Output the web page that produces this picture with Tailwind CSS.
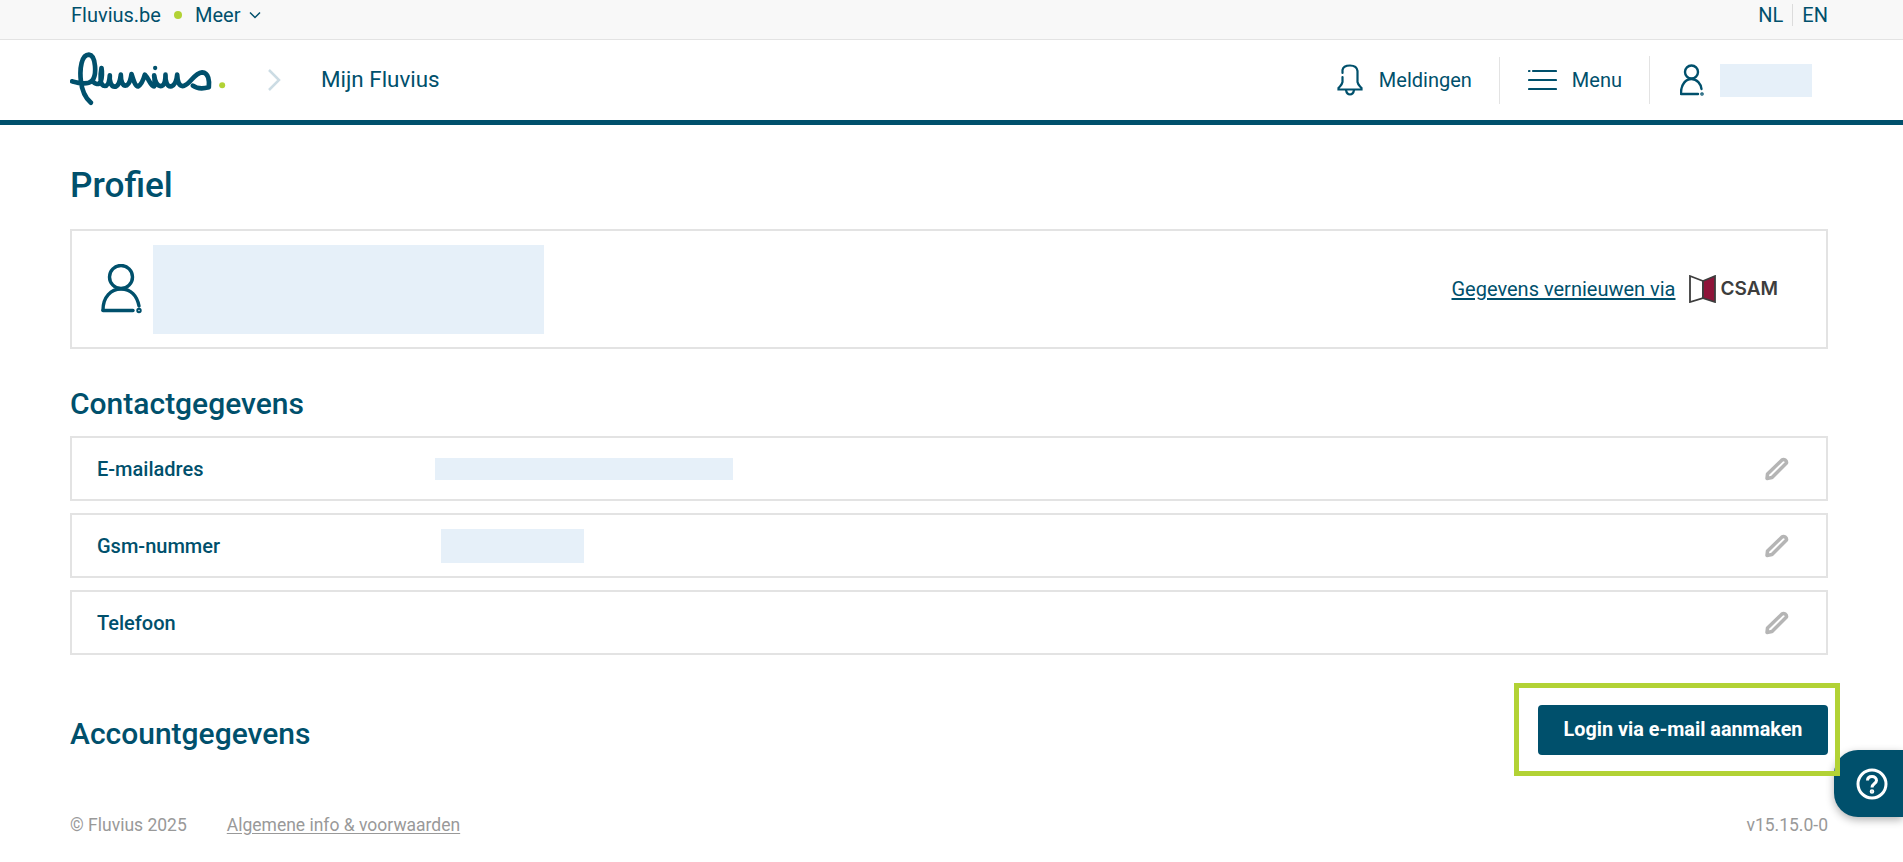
<!DOCTYPE html>
<html lang="nl">
<head>
<meta charset="UTF-8">
<title>Profiel - Mijn Fluvius</title>
<script src="https://cdn.jsdelivr.net/npm/@tailwindcss/browser@4"></script>
</head>
<body class="relative h-[862px] overflow-hidden bg-white font-['Roboto',sans-serif] text-[#00506c]">

<!-- Topbar -->
<div class="flex h-10 items-center justify-between border-b border-[#e3e3e3] bg-[#f8f8f8] pl-[70px] pr-[75px] pb-[9px] text-[20px]">
  <div class="flex items-center">
    <a class="ml-[1px]">Fluvius.be</a>
    <span class="mx-[13px] h-2 w-2 rounded-full bg-[#b2d235]"></span>
    <a>Meer</a>
    <svg class="ml-2" width="14" height="8" viewBox="0 0 14 8" fill="none" stroke="#00506c" stroke-width="1.5"><path d="M2 1.500 7 6.500 12 1.500"/></svg>
  </div>
  <div class="flex items-center">
    <a>NL</a>
    <span class="mx-[9px] h-[22px] w-[1px] bg-[#dcdcdc]"></span>
    <a>EN</a>
  </div>
</div>

<!-- Header -->
<header class="flex h-[85px] items-center justify-between border-b-[5px] border-[#00506c] pl-[70px] pr-[91px]">
  <div class="flex items-center">
    <svg width="157" height="56" viewBox="30 40 470 168" fill="none" stroke="#00506c" stroke-width="14" stroke-linecap="round" stroke-linejoin="round">
      <path d="M36 128C55 133 80 140 96 126C110 110 108 50 86 48C64 48 58 90 62 125C65 155 75 178 92 192"/>
      <path d="M96 126C105 138 116 140 122 128C126 115 126 100 124 88C120 110 118 142 134 142C146 142 148 122 149 110C147 126 152 146 166 144C178 140 180 122 182 108C182 126 186 144 200 140C210 134 212 120 214 106C220 125 226 144 234 143C244 138 250 122 254 108C268 122 270 142 282 143C286 130 282 118 282 110C284 126 290 144 304 142C316 138 316 120 316 108C315 126 320 146 334 143C346 138 350 120 351 108C352 128 356 144 370 142C392 136 400 104 426 101C446 102 448 128 446 146C430 150 410 150 398 141"/>
      <circle cx="285" cy="88" r="3" fill="#00506c" stroke-width="7"/>
      <circle cx="486" cy="140" r="9" fill="#b2d235" stroke="none"/>
    </svg>
    <svg class="ml-[40px]" width="14" height="24" viewBox="0 0 14 24" fill="none" stroke="#ccdce4" stroke-width="2.500"><path d="M2 2 12 12 2 22"/></svg>
    <span class="ml-[40px] text-[22.4px]">Mijn Fluvius</span>
  </div>
  <div class="flex h-full items-center text-[20px]">
    <div class="flex items-center gap-[16px] pr-[27px]">
      <svg width="26" height="32" viewBox="0 0 26 32" fill="none" stroke="#00506c" stroke-width="2.200" stroke-linecap="round"><path d="M5.500 9V6C6 3 9 1.500 13 1.500S20 3 20.500 7V18C21 21 23 22 24.500 24V25.500H1.500V24C3 22 5 21 5.500 18V13"/><path d="M9 26C9.500 29 11 30.500 13 30.500S16.500 29 17 26"/></svg>
      <span>Meldingen</span>
    </div>
    <div class="flex h-[47px] items-center gap-[15px] border-l border-[#e3e3e3] pl-[28px] pr-[27px]">
      <svg width="29" height="22" viewBox="0 0 29 22" fill="none" stroke="#00506c" stroke-width="2.200" stroke-linecap="round"><path d="M1 2H1.500M5 2H28M1 11H28M1 20H28"/></svg>
      <span>Menu</span>
    </div>
    <div class="flex h-[48px] items-center border-l border-[#e3e3e3] pl-[30px]">
      <svg width="24" height="32" viewBox="0 0 24 32" fill="none" stroke="#00506c" stroke-width="2.400" stroke-linecap="round"><circle cx="11.500" cy="8" r="6.500"/><path d="M1 29C1 20 6 15 11.500 15S21 20 21.500 25"/><path d="M1 30H18"/><circle cx="22" cy="30" r=".6"/></svg>
      <div class="ml-[16px] h-[33px] w-[92px] bg-[#e6f0f9]"></div>
    </div>
  </div>
</header>

<main class="pl-[70px] pr-[75px]">
  <h1 class="mt-[34px] text-[35.2px]/[52px] font-medium">Profiel</h1>

  <section class="mt-[18px] flex h-[120px] items-center justify-between border-2 border-[#e3e3e3] pl-[29px] pr-[48px]">
    <div class="flex items-center">
      <svg width="41" height="50" viewBox="0 0 41 50" fill="none" stroke="#00506c" stroke-width="3.400" stroke-linecap="round"><circle cx="20" cy="13" r="11.500"/><path d="M2 46C2 33 10 25 20 25S36 32 38 42"/><path d="M2 46.500H32"/><circle cx="38" cy="46.500" r="1"/></svg>
      <div class="ml-[11px] h-[89px] w-[391px] bg-[#e6f0f9]"></div>
    </div>
    <div class="flex items-center">
      <a class="text-[20px] underline underline-offset-2">Gegevens vernieuwen via</a>
      <svg class="ml-[14px]" width="27" height="28" viewBox="0 0 27 28"><path d="M1 1 14 6V23L1 27Z" fill="#fff" stroke="#3d3d3d" stroke-width="1.800"/><path d="M26 1 14 6V23L26 27Z" fill="#8e1439" stroke="#3d3d3d" stroke-width="1.800"/></svg>
      <span class="ml-[4px] font-['Inter',sans-serif] text-[19px] font-semibold text-[#3d3d3d]">CSAM</span>
    </div>
  </section>

  <h2 class="mt-[33px] text-[30px]/[44px] font-medium">Contactgegevens</h2>

  <div class="mt-[10px] flex flex-col gap-[12px]">
    <div class="flex h-[65px] items-center border-2 border-[#e3e3e3] pl-[25px] pr-[36px]">
      <span class="w-[332px] text-[20px] font-medium">E-mailadres</span>
      <div class="ml-[6px] h-[22px] w-[298px] bg-[#e6f0f9]"></div>
      <svg class="ml-auto" width="26" height="24" viewBox="0 0 26 24" fill="none" stroke="#b5b5b5" stroke-width="3.500"><path d="M3 21.500 3.500 17 18 3C20 1.500 23 3.500 22.500 6L8 20.500Z" stroke-linejoin="round"/></svg>
    </div>
    <div class="flex h-[65px] items-center border-2 border-[#e3e3e3] pl-[25px] pr-[36px]">
      <span class="w-[332px] text-[20px] font-medium">Gsm-nummer</span>
      <div class="ml-[12px] h-[34px] w-[143px] bg-[#e6f0f9]"></div>
      <svg class="ml-auto" width="26" height="24" viewBox="0 0 26 24" fill="none" stroke="#b5b5b5" stroke-width="3.500"><path d="M3 21.500 3.500 17 18 3C20 1.500 23 3.500 22.500 6L8 20.500Z" stroke-linejoin="round"/></svg>
    </div>
    <div class="flex h-[65px] items-center border-2 border-[#e3e3e3] pl-[25px] pr-[36px]">
      <span class="w-[332px] text-[20px] font-medium">Telefoon</span>
      <svg class="ml-auto" width="26" height="24" viewBox="0 0 26 24" fill="none" stroke="#b5b5b5" stroke-width="3.500"><path d="M3 21.500 3.500 17 18 3C20 1.500 23 3.500 22.500 6L8 20.500Z" stroke-linejoin="round"/></svg>
    </div>
  </div>

  <section class="mt-[49px] flex items-center justify-between">
    <h2 class="mt-[8px] text-[30px]/[44px] font-medium">Accountgegevens</h2>
    <div class="relative">
      <button class="flex h-[50px] w-[290px] items-center justify-center rounded-[4px] bg-[#00506c] text-[19.8px] font-bold text-white">Login via e-mail aanmaken</button>
      <div class="absolute -top-[22px] -right-[12px] -bottom-[21px] -left-[24px] z-10 border-[5px] border-[#b2d235]"></div>
    </div>
  </section>

  <footer class="mt-[56px] flex items-center justify-between text-[17.5px] text-[#999999]">
    <div class="flex items-center">
      <span>© Fluvius 2025</span>
      <a class="ml-[40px] underline underline-offset-2">Algemene info &amp; voorwaarden</a>
    </div>
    <span>v15.15.0-0</span>
  </footer>
</main>

<!-- Help -->
<button class="absolute top-[750px] right-0 flex h-[67px] w-[69px] items-center rounded-l-[24px] bg-[#00506c] pl-[22px] shadow-[0_3px_8px_rgba(0,0,0,0.3)]">
  <svg width="32" height="32" viewBox="0 0 32 32" fill="none" stroke="#fff" stroke-width="3"><circle cx="16" cy="16" r="14"/><path d="M11.500 12.500C11.500 9.500 13.500 8.500 16 8.500S20.500 10 20.500 12.500C20.500 15.500 16 15.500 16 19.500"/><circle cx="16" cy="23.500" r=".8" fill="#fff"/></svg>
</button>

</body>
</html>
